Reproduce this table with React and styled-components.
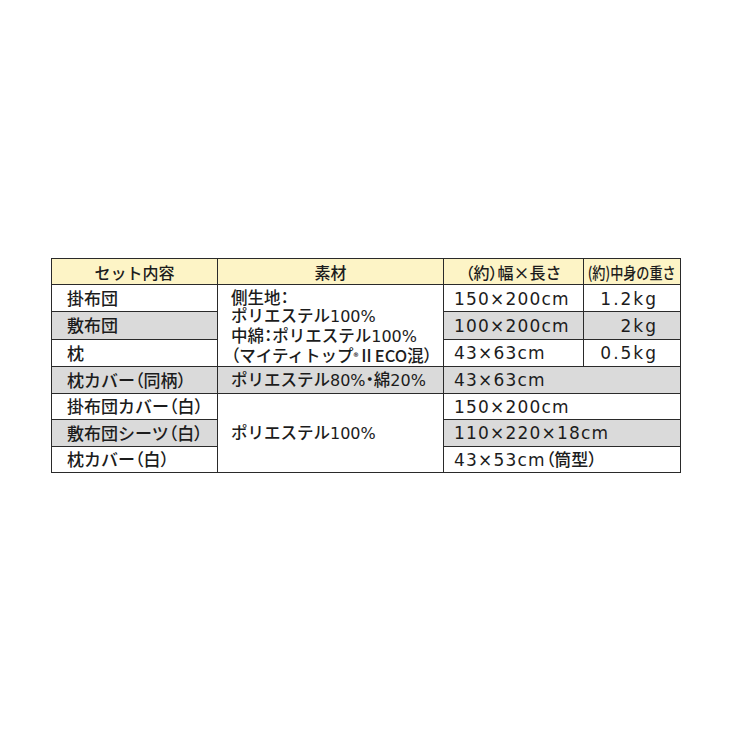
import React from "react"
import styled, { createGlobalStyle } from "styled-components"

const GlobalStyle = createGlobalStyle`
  html, body {
    margin: 0;
    padding: 0;
    background: #fff;
  }
`

const Page = styled.div`
  width: 730px;
  height: 730px;
  display: flex;
  align-items: center;
  justify-content: center;
  font-family: "Noto Sans CJK JP", sans-serif;
  color: #1c1c1c;
`

const Table = styled.table`
  width: 630px;
  table-layout: fixed;
  border-collapse: collapse;
  border: 1.5px solid #2a2a2a;
  margin-top: 1px;
  margin-left: 2px;
`

const Th = styled.th`
  height: 25px;
  padding: 0;
  background: #fdf4c6;
  border: 1px solid #2a2a2a;
  font-size: 16px;
  font-weight: 500;
  text-align: center;
  white-space: nowrap;
  overflow: hidden;
`

const Squeeze = styled.span`
  display: inline-block;
  transform: scaleX(0.82);
  transform-origin: center;
  margin: 0 -10px;
`

const Td = styled.td`
  height: 25.5px;
  padding: 0 ${(p) => p.$padRight || 0}px 0 ${(p) => p.$padLeft || 0}px;
  background: ${(p) => (p.$grey ? "#dadada" : "#fff")};
  border: 1px solid #2a2a2a;
  font-size: ${(p) => p.$size || 17}px;
  font-weight: 500;
  line-height: 18px;
  text-align: ${(p) => p.$align || "left"};
  vertical-align: ${(p) => p.$valign || "middle"};
  white-space: nowrap;
`

// latin figures are wide and geometric in the print original
const Num = styled.span`
  font-family: "DejaVu Sans", "Noto Sans CJK JP", sans-serif;
  font-size: ${(p) => p.$size || 17}px;
  letter-spacing: ${(p) => p.$track || 0}px;
`

// proportional brackets / middle dot, as set in the catalogue
const Punct = styled.span`
  font-feature-settings: "palt";
`

const Lines = styled.div`
  padding-top: 3px;
  line-height: 18px;
`

const Reg = styled.span`
  font-size: 10px;
  vertical-align: 1px;
`

const L = () => <Punct>（</Punct>
const R = () => <Punct>）</Punct>

const Size = ({ children }) => (
  <Num $track={1.2}>{children}</Num>
)

const Weight = ({ children }) => (
  <Num $track={2}>{children}</Num>
)

const Pct = ({ children }) => <Num $size={16}>{children}</Num>

const App = () => (
  <Page>
    <GlobalStyle />
    <Table>
      <colgroup>
        <col style={{ width: 166 }} />
        <col style={{ width: 226 }} />
        <col style={{ width: 140 }} />
        <col style={{ width: 97 }} />
      </colgroup>
      <thead>
        <tr>
          <Th>セット内容</Th>
          <Th>素材</Th>
          <Th>
            <L />約<R />幅×長さ
          </Th>
          <Th>
            <Squeeze>(約)中身の重さ</Squeeze>
          </Th>
        </tr>
      </thead>
      <tbody>
        <tr>
          <Td $padLeft={15}>掛布団</Td>
          <Td rowSpan={3} $padLeft={13} $valign="top" $size={16.5}>
            <Lines>
              側生地<Punct>：</Punct>
              <br />
              ポリエステル<Pct>100%</Pct>
              <br />
              中綿<Punct>：</Punct>ポリエステル<Pct>100%</Pct>
              <br />
              <L />マイティトップ<Reg>®</Reg>ⅡECO混<R />
            </Lines>
          </Td>
          <Td $padLeft={10}><Size>150×200cm</Size></Td>
          <Td $align="right" $padRight={22}><Weight>1.2kg</Weight></Td>
        </tr>
        <tr>
          <Td $grey $padLeft={15}>敷布団</Td>
          <Td $grey $padLeft={10}><Size>100×200cm</Size></Td>
          <Td $grey $align="right" $padRight={22}><Weight>2kg</Weight></Td>
        </tr>
        <tr>
          <Td $padLeft={15}>枕</Td>
          <Td $padLeft={10}><Size>43×63cm</Size></Td>
          <Td $align="right" $padRight={22}><Weight>0.5kg</Weight></Td>
        </tr>
        <tr>
          <Td $grey $padLeft={15}>枕カバー<L />同柄<R /></Td>
          <Td $grey $padLeft={13} $size={16.5}>
            ポリエステル<Pct>80%</Pct><Punct>・</Punct>綿<Pct>20%</Pct>
          </Td>
          <Td $grey colSpan={2} $padLeft={10}><Size>43×63cm</Size></Td>
        </tr>
        <tr>
          <Td $padLeft={15}>掛布団カバー<L />白<R /></Td>
          <Td rowSpan={3} $padLeft={13} $size={16.5}>ポリエステル<Pct>100%</Pct></Td>
          <Td colSpan={2} $padLeft={10}><Size>150×200cm</Size></Td>
        </tr>
        <tr>
          <Td $grey $padLeft={15}>敷布団シーツ<L />白<R /></Td>
          <Td $grey colSpan={2} $padLeft={10}><Size>110×220×18cm</Size></Td>
        </tr>
        <tr>
          <Td $padLeft={15}>枕カバー<L />白<R /></Td>
          <Td colSpan={2} $padLeft={10}><Size>43×53cm</Size><L />筒型<R /></Td>
        </tr>
      </tbody>
    </Table>
  </Page>
)

export default App
